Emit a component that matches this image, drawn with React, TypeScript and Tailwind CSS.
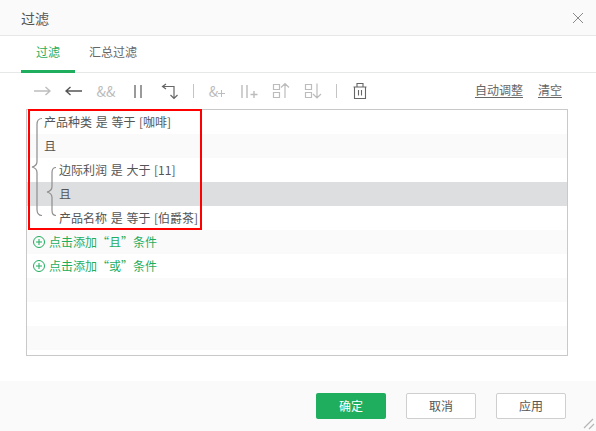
import React from "react";

const F = "font-['Noto_Sans_CJK_SC','Noto_Sans',sans-serif]";

function Ic({ children, w = 24 }: { children: React.ReactNode; w?: number }) {
  return (
    <svg width={w} height="24" viewBox={`0 0 ${w} 24`} fill="none" strokeWidth="1.4" stroke="currentColor" className="shrink-0">
      {children}
    </svg>
  );
}

const Box = ({ children }: { children: React.ReactNode }) => (
  <div className="w-8 h-6 shrink-0 flex items-center justify-center">{children}</div>
);

const Sep = () => <span className="h-[14px] w-px bg-[#c4c4c4] mx-[7px] shrink-0" />;

function Row({ children, cls = "bg-white", pl = "pl-[17px]" }: { children?: React.ReactNode; cls?: string; pl?: string }) {
  return <div className={`h-6 shrink-0 flex items-center text-xs text-[#555] whitespace-nowrap [word-spacing:1px] pb-px ${pl} ${cls}`}>{children}</div>;
}

function Add({ label }: { label: string }) {
  return (
    <span className="flex items-center text-[#1fad5e] [word-spacing:0]">
      <svg width="14" height="14" viewBox="0 0 14 14" fill="none" stroke="#1fad5e" strokeWidth="1" className="mr-[3px] ml-[-12px]">
        <circle cx="7" cy="7" r="5.5" />
        <path d="M4 7h6M7 4v6" />
      </svg>
      {label}
    </span>
  );
}

export default function App() {
  return (
    <div className={`${F} w-[596px] h-[431px] bg-white flex flex-col relative overflow-hidden`}>
      <div className="h-9 shrink-0 bg-[#fafafa] border-b border-[#e6e8e8] flex items-center justify-between pl-[21px] pr-3">
        <span className="text-sm text-[#555]">过滤</span>
        <svg width="12" height="12" viewBox="0 0 12 12" stroke="#8a8a8a" strokeWidth="1">
          <path d="M1 1l10 10M11 1L1 11" />
        </svg>
      </div>

      <div className="h-[37px] shrink-0 border-b border-[#e6e8e8] flex pl-[21px] text-xs">
        <div className="w-[54px] flex items-center justify-center text-[#1fad5e] border-b-[3px] border-[#1fad5e] h-[37px] pb-[2px]">过滤</div>
        <div className="ml-[14px] flex items-center text-[#666] pb-[5px]">汇总过滤</div>
      </div>

      <div className="h-9 shrink-0 flex items-center pl-[26px] pr-[34px] text-[#555]">
        <Box>
          <Ic w={18}>
            <path d="M1 12h16M12.500 8l4.500 4-4.500 4" stroke="#bdbdbd" />
          </Ic>
        </Box>
        <Box>
          <Ic w={18}>
            <path d="M1 12h16M5.500 8L1 12l4.500 4" stroke="#555" />
          </Ic>
        </Box>
        <Box>
          <span className="text-[14px] text-[#bcbcbc]">&amp;&amp;</span>
        </Box>
        <Box>
          <Ic w={12}>
            <path d="M3 6v13M9 6v13" stroke="#9a9a9a" strokeWidth="2" />
          </Ic>
        </Box>
        <Box>
          <Ic w={18}>
            <path d="M5 5L1.500 7.500 5 10M1.500 7.500h11.500V19.500M9.500 16l3.500 3.500L16.500 16" stroke="#666" strokeWidth="1.200" />
          </Ic>
        </Box>
        <Sep />
        <Box>
          <span className="text-[14px] text-[#bcbcbc] flex items-center">
            &amp;<svg width="7" height="7" viewBox="0 0 7 7" stroke="#bcbcbc" className="mt-1"><path d="M0 3.500h7M3.500 0v7" /></svg>
          </span>
        </Box>
        <Box>
          <Ic w={17}>
            <path d="M1 6v13M6 6v13M9.500 15.500h7M13 12v7" stroke="#bcbcbc" strokeWidth="1.400" />
          </Ic>
        </Box>
        <Box>
          <Ic w={18}>
            <path d="M1.500 5.500h6v5h-6zM1.500 13.500h6v5h-6zM13 19V4.500M9 8.500l4-4 4 4" stroke="#bcbcbc" strokeWidth="1.200" />
          </Ic>
        </Box>
        <Box>
          <Ic w={18}>
            <path d="M1.500 5.500h6v5h-6zM1.500 13.500h6v5h-6zM13 4.500V19M9 15l4 4 4-4" stroke="#bcbcbc" strokeWidth="1.200" />
          </Ic>
        </Box>
        <Sep />
        <Box>
          <Ic w={14}>
            <path d="M.5 8h13M1.500 8v11.500h11V8M4 8V4.500h6V8M5.500 11v5.500M8.500 11v5.500" stroke="#666" strokeWidth="1.100" />
          </Ic>
        </Box>
        <div className="ml-auto flex items-center gap-[15px] text-xs text-[#666] pb-[2px]">
          <span className="underline underline-offset-2">自动调整</span>
          <span className="underline underline-offset-2">清空</span>
        </div>
      </div>

      <div className="relative ml-[26px] mr-[28px] h-[247px] shrink-0 border border-[#c9c9c9] flex flex-col overflow-hidden">
        <Row>产品种类 是 等于 [咖啡]</Row>
        <Row cls="bg-[#fafafa]">且</Row>
        <Row pl="pl-8">边际利润 是 大于 [11]</Row>
        <Row cls="bg-[#dddedf]" pl="pl-8">且</Row>
        <Row pl="pl-8">产品名称 是 等于 [伯爵茶]</Row>
        <Row cls="bg-[#fafafa]"><Add label="点击添加“且”条件" /></Row>
        <Row><Add label="点击添加“或”条件" /></Row>
        <Row cls="bg-[#fafafa]" />
        <Row />
        <Row cls="bg-[#fafafa]" />
      </div>

      <svg className="absolute left-[30px] top-[115px]" width="32" height="105" viewBox="0 0 32 105" fill="none" stroke="#8e8e8e" strokeWidth="1.200">
        <path d="M12 3.500c-4 0-5 2-5 6v37c0 3-1 4.500-5 5.500c4 1 5 2.500 5 5.500v37c0 4 1 6 5 6" />
        <path d="M26 52.500c-3 0-4 2-4 5v14c0 3-1 4.500-5 5.500c4 1 5 2.500 5 5.500v13c0 3 1 5 4 5" />
      </svg>

      <div className="absolute left-[28px] top-[109px] w-[174px] h-[121px] border-2 border-[#f00]" />

      <div className="flex-1" />
      <div className="h-[50px] shrink-0 bg-[#fafafa] flex items-center justify-end pr-[30px] gap-5 text-xs">
        <button className="w-[70px] h-[26px] rounded-[2px] bg-[#1fad5e] text-white">确定</button>
        <button className="w-[70px] h-[26px] rounded-[2px] bg-white border border-[#cfcfcf] text-[#555]">取消</button>
        <button className="w-[70px] h-[26px] rounded-[2px] bg-white border border-[#cfcfcf] text-[#555]">应用</button>
      </div>
      <svg className="absolute right-[1px] bottom-[1px]" width="12" height="12" viewBox="0 0 12 12" stroke="#b5b5b5" strokeWidth="1.200">
        <path d="M1 10L10 1M6 11l5-5" />
      </svg>
    </div>
  );
}
